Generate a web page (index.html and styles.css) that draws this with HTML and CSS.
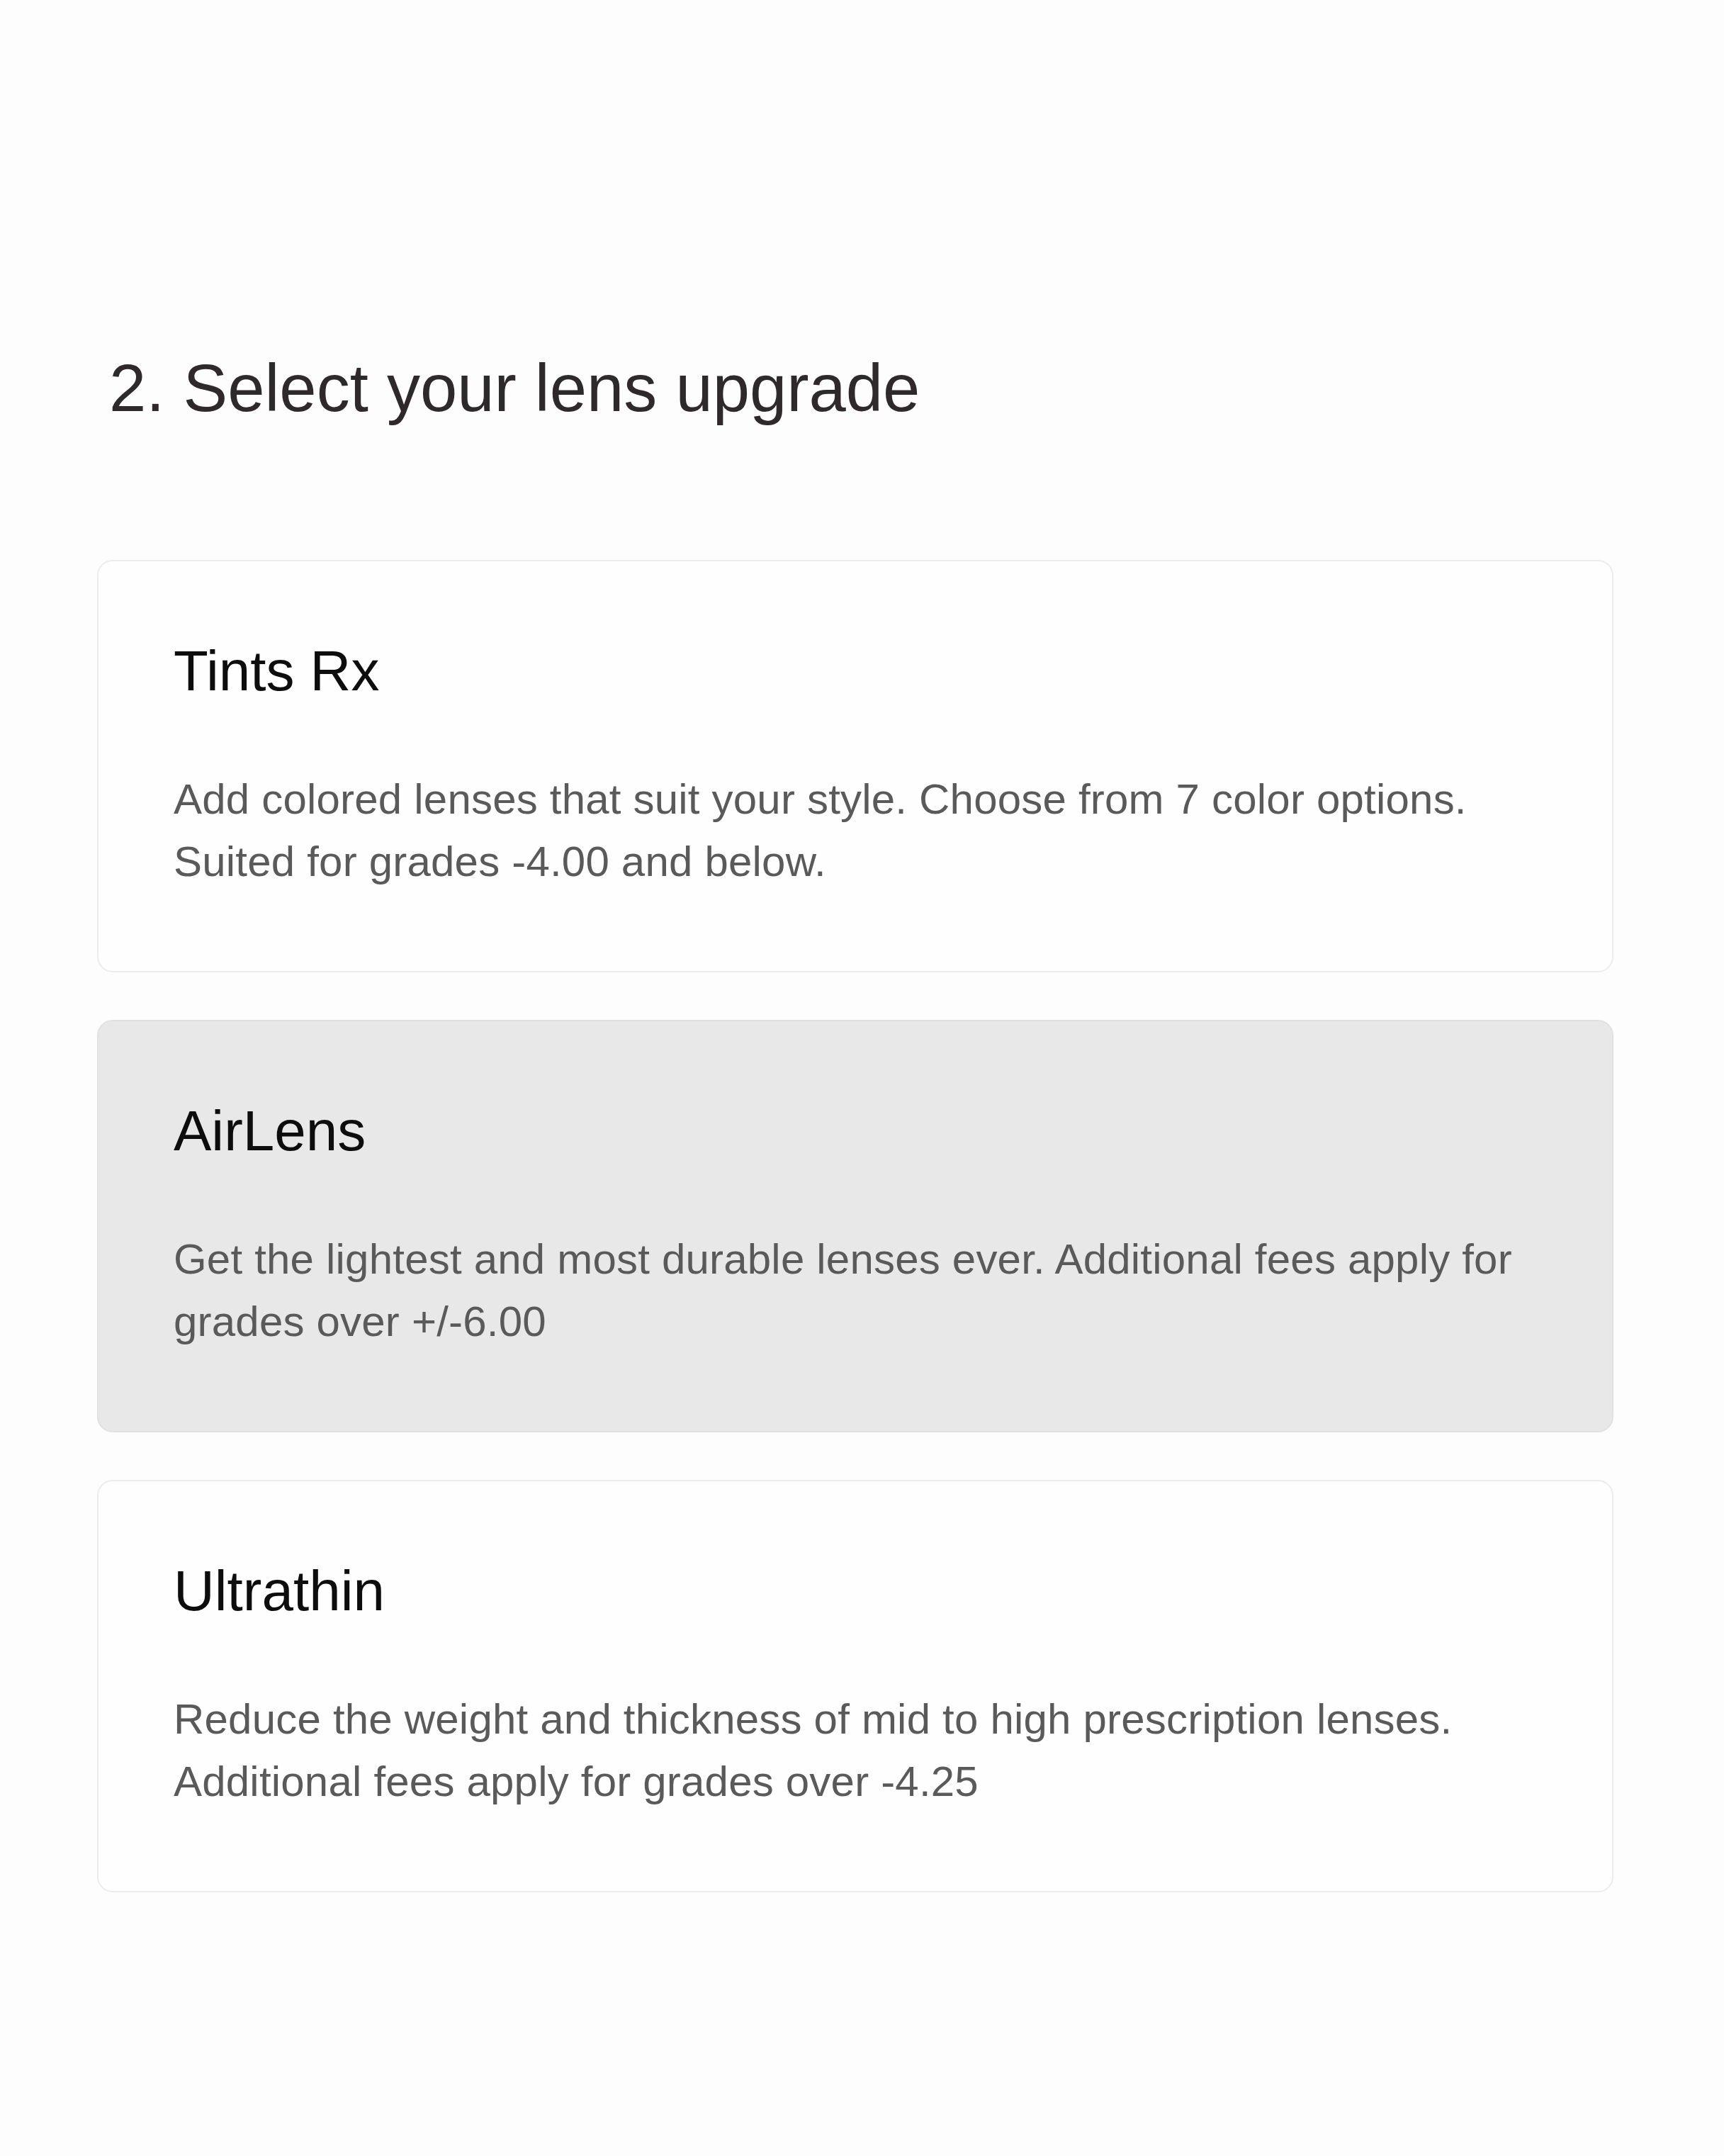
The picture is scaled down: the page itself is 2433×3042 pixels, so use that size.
FILE: index.html
```html
<!DOCTYPE html>
<html lang="en">
<head>
<meta charset="utf-8">
<title>Select your lens upgrade</title>
<link rel="stylesheet" href="styles.css">
</head>
<body>
<main class="page">
  <h1 class="heading">2. Select your lens upgrade</h1>
  <div class="options">
    <div class="option">
      <h2 class="option-title">Tints Rx</h2>
      <p class="option-desc">Add colored lenses that suit your style. Choose from 7 color options. Suited for grades -4.00 and below.</p>
    </div>
    <div class="option option-selected">
      <h2 class="option-title">AirLens</h2>
      <p class="option-desc">Get the lightest and most durable lenses ever. Additional fees apply for grades over +/-6.00</p>
    </div>
    <div class="option">
      <h2 class="option-title">Ultrathin</h2>
      <p class="option-desc">Reduce the weight and thickness of mid to high prescription lenses. Additional fees apply for grades over -4.25</p>
    </div>
  </div>
</main>
</body>
</html>
```

FILE: styles.css
```css
html, body {
  margin: 0;
  padding: 0;
  background: #fdfdfd;
}

body {
  font-family: "Liberation Sans", Arial, sans-serif;
  min-height: 3042px;
}

.page {
  padding: 491px 0 0 137px;
  width: 2140px;
}

.heading {
  margin: 0 0 186px 17px;
  font-size: 94px;
  font-weight: 400;
  line-height: 113px;
  color: #2e2a2b;
}

.options {
  display: flex;
  flex-direction: column;
  gap: 67px;
}

.option {
  box-sizing: border-box;
  height: 582px;
  padding: 107px 106px 0 106px;
  background: #fefefe;
  border: 2px solid #ececec;
  border-radius: 22px;
}

.option-selected {
  background: #e8e8e8;
  border-color: #e1e1e1;
}

.option-title {
  margin: 0 0 89px 0;
  font-size: 80px;
  font-weight: 400;
  line-height: 96px;
  color: #0d0d0d;
}

.option-desc {
  margin: 0;
  font-size: 60px;
  line-height: 88px;
  letter-spacing: 0.2px;
  color: #5a5a5a;
}
```
